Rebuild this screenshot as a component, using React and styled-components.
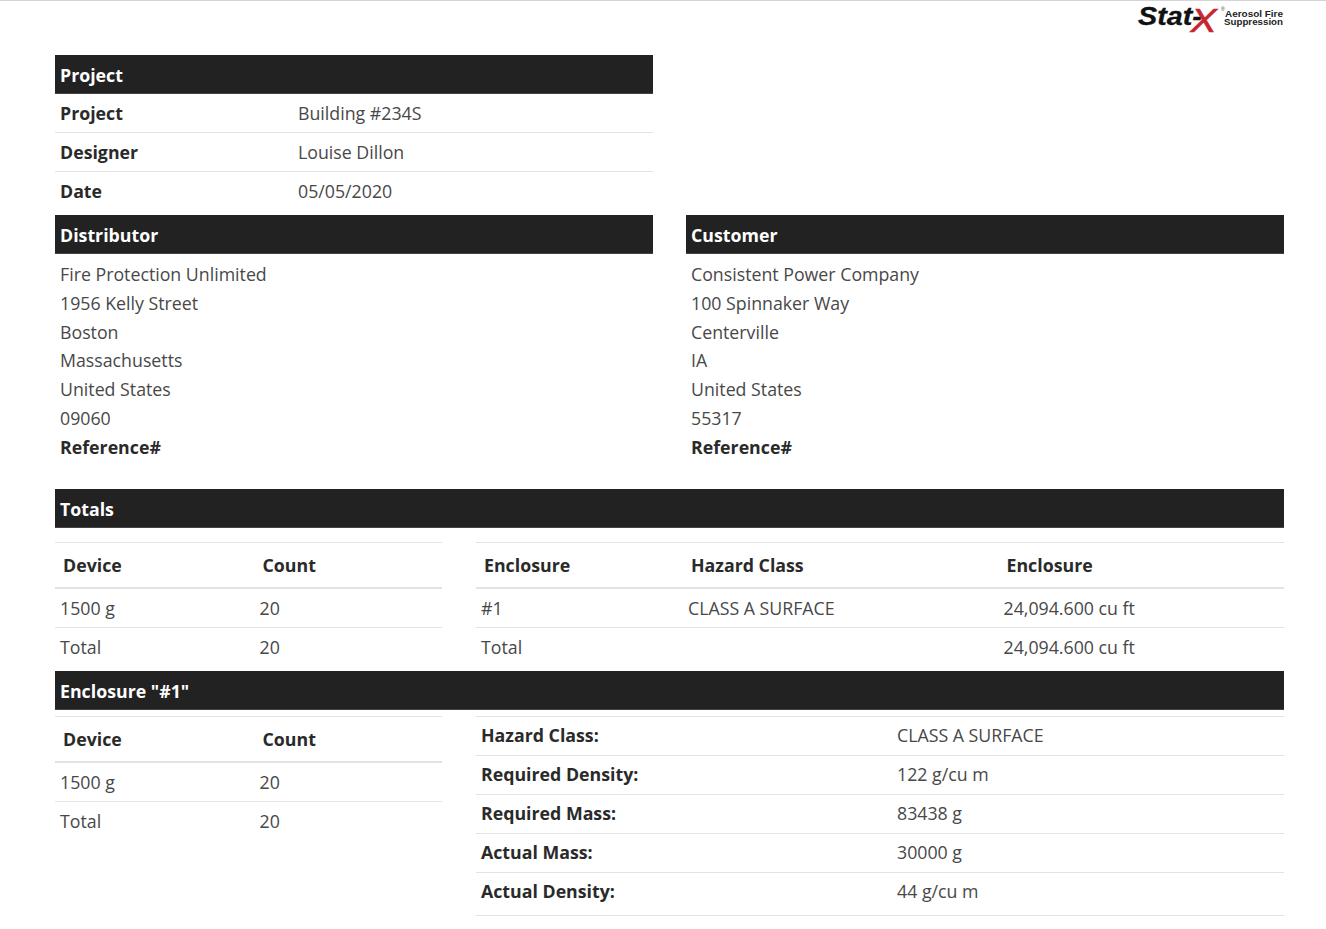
import React from 'react'
import styled, {createGlobalStyle} from 'styled-components'

const GlobalStyle = createGlobalStyle`
    html, body {
        margin: 0;
        padding: 0;
        background: #fff;
    }
    body {
        font-family: "Open Sans", "Liberation Sans", sans-serif;
        font-size: 17.75px;
        color: #484848;
    }
`
const Page = styled.div`
    width: 1326px;
    height: 929px;
    overflow: hidden;
    border-top: 1px solid #d4d4d4;
    box-sizing: border-box;
    padding: 0 42px 0 55px;
`
const LogoRow = styled.div`
    height: 54px;
    display: flex;
    justify-content: flex-end;
    align-items: flex-start;
`
const TwoCols = styled.div`
    display: grid;
    grid-template-columns: 598px 598px;
    column-gap: 33px;
`
const SplitCols = styled.div`
    display: grid;
    grid-template-columns: 387px 808px;
    column-gap: 34px;
`
const Bar = styled.div`
    height: 39px;
    box-sizing: border-box;
    background: #222;
    border-bottom: 1px solid #444;
    color: #fff;
    font-weight: 700;
    line-height: 41px;
    padding-left: 5px;
    margin-bottom: ${props => props.$after || 0}px;
`
const Row = styled.div`
    display: grid;
    grid-template-columns: ${props => props.$cols};
    height: 39px;
    box-sizing: border-box;
    border-bottom: ${props => props.$last ? "none" : "1px solid #e4e4e4"};
    line-height: 38px;
    padding-left: 5px;
`
const DetailList = styled.div`
    border-top: 1px solid #e4e4e4;
`
const DetailRow = styled(Row)`
    height: ${props => props.$tall ? 43 : 39}px;
    line-height: 36px;
    border-bottom: 1px solid #e4e4e4;
`
const Label = styled.span`
    font-weight: 700;
    color: #2a2a2a;
`
const Address = styled.div`
    padding: 6px 0 27.4px 5px;
    line-height: 28.8px;
`
const HeadRow = styled.div`
    display: grid;
    grid-template-columns: ${props => props.$cols};
    height: 47px;
    box-sizing: border-box;
    border-top: 1px solid #e4e4e4;
    border-bottom: 2px solid #e2e2e2;
    line-height: 44px;
    padding-left: 8px;
    font-weight: 700;
    color: #2a2a2a;
`
const Spacer = styled.div`
    height: ${props => props.$h}px;
`
const LogoSvg = styled.svg`
    display: block;
    width: 150px;
    height: 40px;
    margin-right: -1px;
`

const deviceCols = "199.5px 1fr"
const enclosureCols = "207px 315.5px 1fr"
const detailCols = "416px 1fr"
const logoFont = "'Liberation Sans', sans-serif"

function Logo() {
    return (
        <LogoSvg viewBox="0 0 150 40">
            <text transform="translate(3 24) scale(1.15 1)" fontFamily={logoFont} fontStyle="italic" fontWeight="700" fontSize="25" fill="#111" stroke="#111" strokeWidth="0.3">
                <tspan>Stat-</tspan>
                <tspan dx="-10" dy="7" fontSize="34" fontWeight="400" fill="#c8262c" stroke="#c8262c" strokeWidth="0.6">X</tspan>
            </text>
            <text x="86" y="10" fontFamily={logoFont} fontSize="5" fill="#333">®</text>
            <text x="90" y="16" fontFamily={logoFont} fontWeight="700" fontSize="9" textLength="58" lengthAdjust="spacingAndGlyphs" fill="#222">Aerosol Fire</text>
            <text x="89" y="24" fontFamily={logoFont} fontWeight="700" fontSize="9" textLength="59" lengthAdjust="spacingAndGlyphs" fill="#222">Suppression</text>
        </LogoSvg>
    )
}

function DeviceTable() {
    return (
        <div>
            <HeadRow $cols={deviceCols}><span>Device</span><span>Count</span></HeadRow>
            <Row $cols={deviceCols}><span>1500 g</span><span>20</span></Row>
            <Row $cols={deviceCols} $last><span>Total</span><span>20</span></Row>
        </div>
    )
}

function Details({rows}) {
    return (
        <DetailList>
            {rows.map(([label, value], i) => (
                <DetailRow key={label} $cols={detailCols} $tall={i === rows.length - 1}><Label>{label}</Label><span>{value}</span></DetailRow>
            ))}
        </DetailList>
    )
}

function App() {
    return (
        <Page>
            <GlobalStyle />
            <LogoRow><Logo /></LogoRow>
            <TwoCols>
                <div>
                    <Bar>Project</Bar>
                    <Row $cols="238px 1fr"><Label>Project</Label><span>Building #234S</span></Row>
                    <Row $cols="238px 1fr"><Label>Designer</Label><span>Louise Dillon</span></Row>
                    <Row $cols="238px 1fr" $last><Label>Date</Label><span>05/05/2020</span></Row>
                </div>
            </TwoCols>
            <Spacer $h={4} />
            <TwoCols>
                <div>
                    <Bar>Distributor</Bar>
                    <Address>
                        <div>Fire Protection Unlimited</div>
                        <div>1956 Kelly Street</div>
                        <div>Boston</div>
                        <div>Massachusetts</div>
                        <div>United States</div>
                        <div>09060</div>
                        <Label>Reference#</Label>
                    </Address>
                </div>
                <div>
                    <Bar>Customer</Bar>
                    <Address>
                        <div>Consistent Power Company</div>
                        <div>100 Spinnaker Way</div>
                        <div>Centerville</div>
                        <div>IA</div>
                        <div>United States</div>
                        <div>55317</div>
                        <Label>Reference#</Label>
                    </Address>
                </div>
            </TwoCols>
            <Bar $after={14}>Totals</Bar>
            <SplitCols>
                <DeviceTable />
                <div>
                    <HeadRow $cols={enclosureCols}><span>Enclosure</span><span>Hazard Class</span><span>Enclosure</span></HeadRow>
                    <Row $cols={enclosureCols}><span>#1</span><span>CLASS A SURFACE</span><span>24,094.600 cu ft</span></Row>
                    <Row $cols={enclosureCols} $last><span>Total</span><span></span><span>24,094.600 cu ft</span></Row>
                </div>
            </SplitCols>
            <Spacer $h={4} />
            <Bar $after={6}>Enclosure "#1"</Bar>
            <SplitCols>
                <DeviceTable />
                <Details rows={[
                    ["Hazard Class:", "CLASS A SURFACE"],
                    ["Required Density:", "122 g/cu m"],
                    ["Required Mass:", "83438 g"],
                    ["Actual Mass:", "30000 g"],
                    ["Actual Density:", "44 g/cu m"],
                ]} />
            </SplitCols>
        </Page>
    )
}
export default App
